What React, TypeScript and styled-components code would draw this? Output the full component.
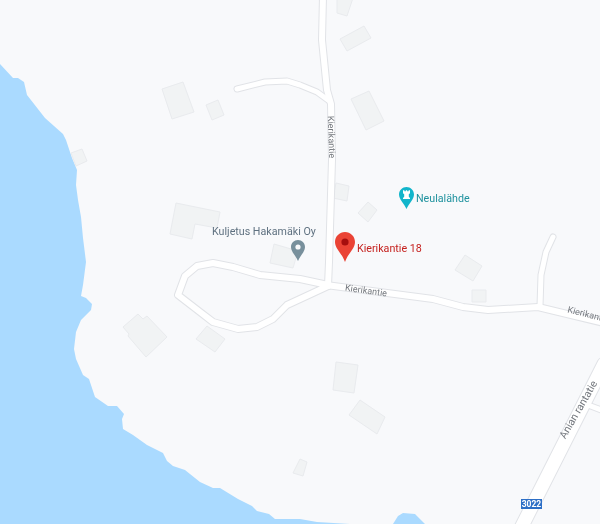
import React from 'react';
import styled, { createGlobalStyle } from 'styled-components';

const GlobalStyle = createGlobalStyle`
  html, body {
    margin: 0;
    padding: 0;
    background: #f8f9fb;
    font-family: Roboto, "Liberation Sans", sans-serif;
  }
`;

// the reference is a slightly soft, rescaled map tile
const MapCanvas = styled.div`
  position: relative;
  width: 600px;
  height: 524px;
  overflow: hidden;
  background: #f8f9fb;
  filter: blur(0.35px);
`;

const MapLayer = styled.svg`
  position: absolute;
  top: 0;
  left: 0;
  display: block;
`;

const Water = styled.path`
  fill: #aadaff;
`;

const Building = styled.polygon`
  fill: #f1f3f4;
  stroke: #e9ebee;
  stroke-width: 1;
`;

const RoadCasing = styled.path<{ $width: number }>`
  fill: none;
  stroke: #e1e3e7;
  stroke-width: ${(p) => p.$width + 2}px;
  stroke-linecap: round;
  stroke-linejoin: round;
`;

const RoadFill = styled.path<{ $width: number }>`
  fill: none;
  stroke: #ffffff;
  stroke-width: ${(p) => p.$width}px;
  stroke-linecap: round;
  stroke-linejoin: round;
`;

const RoadLabel = styled.span<{ $x: number; $y: number; $angle: number; $size: number }>`
  position: absolute;
  left: ${(p) => p.$x}px;
  top: ${(p) => p.$y}px;
  font-size: ${(p) => p.$size}px;
  line-height: 1;
  color: #74787e;
  white-space: nowrap;
  transform: translate(-50%, -50%) rotate(${(p) => p.$angle}deg);
`;

// a pin with its name, placed on the map at its coordinates
const Marker = styled.div<{ $x: number; $y: number; $stacked?: boolean }>`
  position: absolute;
  left: ${(p) => p.$x}px;
  top: ${(p) => p.$y}px;
  display: flex;
  flex-direction: ${(p) => (p.$stacked ? 'column' : 'row')};
  align-items: ${(p) => (p.$stacked ? 'flex-end' : 'flex-start')};
  gap: 2px;
`;

const PlaceName = styled.span<{ $color: string; $drop?: number }>`
  margin-top: ${(p) => p.$drop ?? 0}px;
  font-size: 10.7px;
  line-height: 13px;
  color: ${(p) => p.$color};
  white-space: nowrap;
`;

const Pin = styled.svg<{ $inset?: number }>`
  display: block;
  flex: none;
  margin-right: ${(p) => p.$inset ?? 0}px;
`;

const RouteShield = styled.div`
  position: absolute;
  left: 521px;
  top: 499px;
  width: 21px;
  height: 10px;
  display: flex;
  align-items: center;
  justify-content: center;
  background: #2d6fc6;
  color: #fff;
  font-size: 8.5px;
  font-weight: 700;
  line-height: 1;
`;

const waterPath =
  'M0 64 L13 78 L18 78 L24 82 L27 95 L45 118 L63 134 L66 140 L72 158 L77 170 L76 185 L78 200 L81 217 L83 238 L86 262 L83 285 L81 296 L86 298 L92 304 L91 310 L81 320 L76 332 L74 349 L76 359 L83 375 L89 379 L95 397 L108 406 L117 406 L124 414 L122 419 L123 429 L133 435 L147 445 L163 453 L167 461 L173 466 L185 470 L200 482 L213 488 L220 488 L238 499 L252 506 L257 511 L269 514 L275 519 L300 519 L317 522 L350 524 L0 524 Z M393 524 L398 516 L403 513 L415 514 L425 524 Z';

const buildings = [
  '162,89 183,82 194,112 172,119',
  '206,105 218,100 224,115 212,120',
  '71,153 82,149 87,161 76,166',
  '176,203 220,212 217,228 195,224 192,239 170,234',
  '274,244 298,251 293,268 270,263',
  '337,-2 353,-2 347,16 337,13',
  '340,39 364,26 371,38 347,51',
  '351,99 369,91 384,121 366,130',
  '336,183 349,186 347,201 333,198',
  '358,213 368,202 377,210 368,222',
  '455,270 465,255 482,266 473,281',
  '472,290 486,290 486,302 472,302',
  '336,362 358,365 354,393 333,390',
  '360,400 385,417 377,434 349,415',
  '300,459 307,462 303,476 293,473',
  '138,314 143,319 147,316 167,337 146,357 128,336 129,334 123,327',
  '207,326 225,339 215,352 196,339',
];

const roads = [
  { id: 'north', width: 6, d: 'M323 -4 L322 40 L327 90 L331 104 L332 160 L329 262 L328 286' },
  { id: 'spur', width: 5, d: 'M237 89 L265 82 L287 81 L300 85 L317 92 L328 100' },
  { id: 'east', width: 6, d: 'M326 285 L433 299 L463 307 L488 310 L538 307 L567 314 L604 323' },
  { id: 'stub', width: 5, d: 'M540 306 L541 275 L546 252 L553 237' },
  {
    id: 'loop',
    width: 6,
    d: 'M328 285 L300 279 L260 275 L233 267 L213 263 L197 266 L185 276 L178 295 L200 312 L213 322 L238 329 L257 327 L273 319 L287 305 L300 299 L328 286',
  },
  { id: 'side', width: 5, d: 'M588 405 L604 411' },
  { id: 'anian', width: 13, d: 'M520 530 L604 364' },
];

function App() {
  return (
    <MapCanvas>
      <GlobalStyle />
      <MapLayer width="600" height="524" viewBox="0 0 600 524">
        <Water d={waterPath} />
        {buildings.map((points) => (
          <Building key={points} points={points} />
        ))}
        {roads.map((r) => (
          <RoadCasing key={r.id} $width={r.width} d={r.d} />
        ))}
        {roads.map((r) => (
          <RoadFill key={r.id} $width={r.width} d={r.d} />
        ))}
      </MapLayer>

      <RoadLabel $x={331} $y={137} $angle={88} $size={9}>Kierikantie</RoadLabel>
      <RoadLabel $x={366} $y={291} $angle={8} $size={9}>Kierikantie</RoadLabel>
      <RoadLabel $x={588} $y={315} $angle={14} $size={9}>Kierikantie</RoadLabel>
      <RoadLabel $x={579} $y={410} $angle={-60} $size={10.5}>Anian rantatie</RoadLabel>

      <Marker $x={212} $y={225} $stacked>
        <PlaceName $color="#5f7180">Kuljetus Hakamäki Oy</PlaceName>
        <Pin $inset={11} width="14" height="21" viewBox="0 0 14 21">
          <path d="M7 0C3.1 0 0 3.1 0 7c0 4.6 4.7 8.6 7 14 2.3-5.4 7-9.4 7-14 0-3.9-3.1-7-7-7z" fill="#78909c" />
          <circle cx="7" cy="7" r="2.6" fill="#f8f9fb" />
        </Pin>
      </Marker>

      <Marker $x={399} $y={187}>
        <Pin width="15" height="22" viewBox="0 0 15 22">
          <path d="M7.5 0C3.4 0 0 3.4 0 7.5c0 4.9 5 9 7.5 14.5C10 16.5 15 12.4 15 7.5 15 3.4 11.6 0 7.5 0z" fill="#12b5cb" />
          <path d="M4 3.2h1.4v1.1h1.4V3.2h1.4v1.1h1.4V3.2H11v3l-1.2 1v2.5L11 11v1H4v-1l1.2-1.3V7.2L4 6.2z" fill="#fff" />
        </Pin>
        <PlaceName $color="#1f929e" $drop={5}>Neulalähde</PlaceName>
      </Marker>

      <Marker $x={335} $y={232}>
        <Pin width="20" height="30" viewBox="0 0 20 30">
          <path d="M10 0C4.5 0 0 4.4 0 9.9c0 6.8 7 11.2 10 20.1 3-8.9 10-13.3 10-20.1C20 4.4 15.5 0 10 0z" fill="#ea4335" />
          <circle cx="10" cy="10" r="3.6" fill="#a50e0e" />
        </Pin>
        <PlaceName $color="#c5221f" $drop={10}>Kierikantie 18</PlaceName>
      </Marker>

      <RouteShield>3022</RouteShield>
    </MapCanvas>
  );
}

export default App;
